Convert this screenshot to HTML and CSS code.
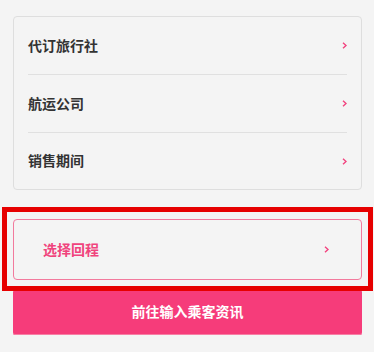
FILE: index.html
```html
<!DOCTYPE html>
<html lang="zh-CN">
<head>
<meta charset="utf-8">
<link rel="stylesheet" href="styles.css">
</head>
<body>
<div class="page">
  <div class="card">
    <div class="row"><span class="label">代订旅行社</span><svg class="chev" width="5" height="7" viewBox="0 0 5 7"><path d="M1 0.8 L4 3.5 L1 6.2" fill="none" stroke="#f2427e" stroke-width="1.4"/></svg></div>
    <div class="row"><span class="label">航运公司</span><svg class="chev" width="5" height="7" viewBox="0 0 5 7"><path d="M1 0.8 L4 3.5 L1 6.2" fill="none" stroke="#f2427e" stroke-width="1.4"/></svg></div>
    <div class="row"><span class="label">销售期间</span><svg class="chev" width="5" height="7" viewBox="0 0 5 7"><path d="M1 0.8 L4 3.5 L1 6.2" fill="none" stroke="#f2427e" stroke-width="1.4"/></svg></div>
  </div>
  <div class="return">
    <span class="return-label">选择回程</span><svg class="chev" width="5" height="7" viewBox="0 0 5 7"><path d="M1 0.8 L4 3.5 L1 6.2" fill="none" stroke="#f2427e" stroke-width="1.4"/></svg>
  </div>
  <div class="submit"><span class="submit-label">前往输入乘客资讯</span></div>
  <div class="highlight"></div>
</div>
</body>
</html>
```
FILE: styles.css
```css
html, body {
  margin: 0;
  padding: 0;
  background: #f4f4f4;
}
body {
  font-family: "Noto Sans CJK SC", "Noto Sans", sans-serif;
  width: 374px;
  height: 352px;
  overflow: hidden;
}
.page {
  position: relative;
  padding: 16px 12px 0 13px;
}
.card {
  border: 1px solid #dedede;
  border-radius: 4px;
  padding: 0 14px;
  background: #f4f4f4;
}
.row {
  height: 57px;
  display: flex;
  align-items: center;
  justify-content: space-between;
  border-bottom: 1px solid #e0e0e0;
}
.row:last-child {
  border-bottom: none;
  height: 56px;
}
.label {
  font-size: 14px;
  font-weight: 700;
  color: #333;
  line-height: 1;
  padding-bottom: 2px;
}
.chev {
  display: block;
}
.return {
  margin-top: 29px;
  height: 59px;
  border: 1px solid #f27a9d;
  border-radius: 4px;
  display: flex;
  align-items: center;
  justify-content: space-between;
  padding: 0 32px 0 29px;
}
.return-label {
  font-size: 14px;
  font-weight: 700;
  color: #f0447d;
  line-height: 1;
  padding-bottom: 2px;
}
.submit {
  margin-top: 10px;
  height: 45px;
  border-radius: 2px;
  background: #f63c7a;
  box-shadow: inset 0 -1px 0 #f77ea4;
  color: #fff;
  font-size: 14px;
  font-weight: 700;
  display: flex;
  align-items: center;
  justify-content: center;
}
.submit-label {
  line-height: 1;
  padding-bottom: 3px;
}
.highlight {
  position: absolute;
  left: 2px;
  top: 207px;
  width: 371px;
  height: 84px;
  box-sizing: border-box;
  border: 5px solid #e60000;
}
```
